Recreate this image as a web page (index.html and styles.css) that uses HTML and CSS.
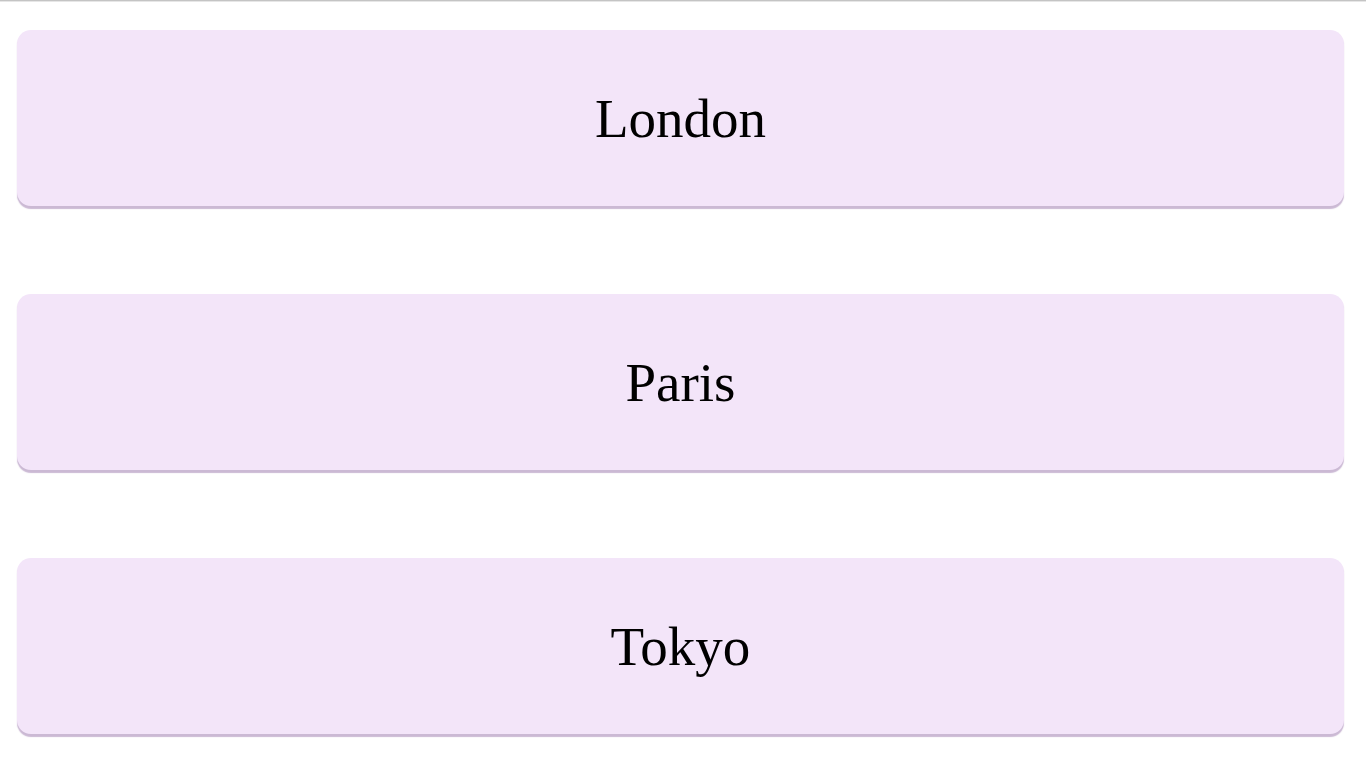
FILE: index.html
```html
<!DOCTYPE html>
<html>
<head>
<meta charset="utf-8">
<link rel="stylesheet" href="styles.css">
</head>
<body>
<div class="topline"></div>
<main class="list">
  <div class="card">London</div>
  <div class="card">Paris</div>
  <div class="card">Tokyo</div>
</main>
</body>
</html>
```
FILE: styles.css
```css
html, body {
  margin: 0;
  padding: 0;
  background: #ffffff;
}
.topline {
  height: 1px;
  background: #c4c4c4;
  border-bottom: 1px solid #e6e6e6;
}
.list {
  display: flex;
  flex-direction: column;
  gap: 88px;
  padding: 28px 22px 8px 17px;
}
.card {
  height: 176px;
  display: flex;
  align-items: center;
  justify-content: center;
  background: #f3e5f9;
  border-radius: 14px;
  box-shadow: 0 3px 1px rgba(140, 100, 160, 0.45);
  font-family: "Liberation Serif", "Times New Roman", serif;
  font-size: 55px;
  color: #000;
}
```
